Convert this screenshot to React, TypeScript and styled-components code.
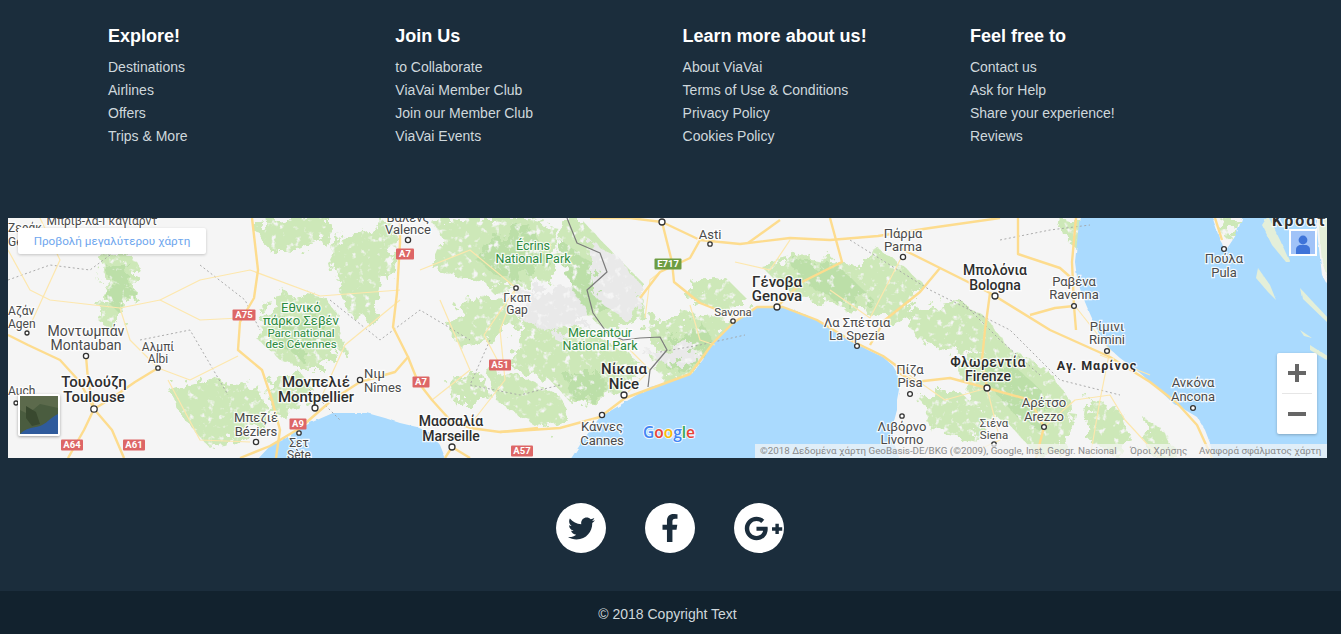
import styled, { createGlobalStyle } from 'styled-components';
import { FaTwitter, FaFacebookF, FaGooglePlusG } from 'react-icons/fa';

const GlobalStyle = createGlobalStyle`
  html, body {
    margin: 0;
    padding: 0;
    background: #1b2d3c;
    font-family: "Liberation Sans", Arial, sans-serif;
  }
`;

const Page = styled.footer`
  height: 634px;
  overflow: hidden;
  background: #1b2d3c;
  display: flex;
  flex-direction: column;
`;

const LinkColumns = styled.div`
  display: grid;
  grid-template-columns: repeat(4, 287.3px);
  padding: 25px 0 0 108px;
  height: 218px;
  box-sizing: border-box;
`;

const ColumnTitle = styled.h4`
  margin: 0 0 8.5px;
  color: #ffffff;
  font-size: 18px;
  line-height: 22px;
  font-weight: 700;
`;

const LinkList = styled.ul`
  margin: 0;
  padding: 0;
  list-style: none;
`;

const LinkItem = styled.li`
  color: #cfd8dc;
  font-size: 14px;
  line-height: 23px;
`;

const MapFrame = styled.div`
  position: relative;
  width: 1319px;
  height: 240px;
  margin-left: 8px;
  overflow: hidden;
  background: #f5f5f5;
  flex: none;
`;

const MapArt = styled.svg`
  display: block;
  width: 1319px;
  height: 240px;
`;

const MapLabel = styled.text<{ $size: number; $weight: number; $park?: boolean; $spacing?: number }>`
  font-family: Roboto, "Noto Sans", sans-serif;
  font-size: ${p => p.$size}px;
  font-weight: ${p => p.$weight};
  letter-spacing: ${p => p.$spacing ?? 0}px;
  fill: ${p => (p.$park ? '#2b8a3e' : p.$weight > 400 ? '#2e2e2e' : '#4a4a4a')};
  stroke: rgba(255, 255, 255, 0.85);
  stroke-width: 2.4px;
  paint-order: stroke;
`;

const ShieldText = styled.text`
  font-family: Roboto, "Liberation Sans", sans-serif;
  font-size: 9.5px;
  font-weight: 700;
  fill: #ffffff;
  text-anchor: middle;
`;

const GoogleMark = styled.text`
  font-family: "Open Sans", Roboto, sans-serif;
  font-size: 15.5px;
  font-weight: 600;
  stroke: rgba(255, 255, 255, 0.8);
  stroke-width: 2px;
  paint-order: stroke;
`;

const LargerMapButton = styled.div`
  position: absolute;
  left: 10px;
  top: 10px;
  width: 188px;
  height: 26px;
  background: #ffffff;
  border-radius: 2px;
  box-shadow: 0 1px 3px rgba(0, 0, 0, 0.2);
  color: #6ea6ee;
  font-family: Roboto, sans-serif;
  font-size: 11.7px;
  line-height: 26px;
  text-align: center;
`;

const PegmanBox = styled.div`
  position: absolute;
  left: 1281px;
  top: 11px;
  width: 24px;
  height: 23px;
  border: 2px solid #ffffff;
  background: #a1c3f8;
  display: flex;
  align-items: flex-end;
  justify-content: center;
`;

const ZoomControl = styled.div`
  position: absolute;
  left: 1269px;
  top: 135px;
  width: 40px;
  height: 81px;
  background: #ffffff;
  border-radius: 2px;
  box-shadow: 0 1px 3px rgba(0, 0, 0, 0.25);
  display: flex;
  flex-direction: column;
  align-items: center;
`;

const ZoomButton = styled.div`
  width: 100%;
  height: 40px;
  display: flex;
  align-items: center;
  justify-content: center;
`;

const ZoomDivider = styled.div`
  width: 30px;
  height: 1px;
  background: #e6e6e6;
`;

const SatelliteThumb = styled.div`
  position: absolute;
  left: 10px;
  top: 176px;
  width: 38px;
  height: 38px;
  border: 2px solid #ffffff;
  border-radius: 2px;
  box-shadow: 0 1px 3px rgba(0, 0, 0, 0.35);
  overflow: hidden;
`;

const Attribution = styled.div`
  position: absolute;
  right: 0;
  bottom: 0;
  width: 567px;
  height: 14px;
  padding-left: 5px;
  background: rgba(245, 245, 245, 0.72);
  display: flex;
  color: #8a8a8a;
  font-family: Roboto, sans-serif;
  font-size: 9.8px;
  line-height: 14px;
  white-space: nowrap;
`;

const AttributionItem = styled.span<{ $width: number }>`
  width: ${p => p.$width}px;
  flex: none;
`;

const SocialRow = styled.div`
  display: flex;
  gap: 39px;
  margin: 45px 0 38px 556px;
`;

const SocialCircle = styled.a`
  width: 50px;
  height: 50px;
  border-radius: 50%;
  background: #ffffff;
  color: #1b2d3c;
  display: flex;
  align-items: center;
  justify-content: center;
  flex: none;
`;

const PlusIcon = styled(FaGooglePlusG)`
  margin-left: 9px;
`;

const CopyrightBar = styled.div`
  height: 43px;
  background: #12222e;
  color: #cfd8dc;
  font-size: 14px;
  line-height: 46px;
  text-align: center;
  padding-right: 6px;
`;

const COLUMNS = [
  { title: 'Explore!', links: ['Destinations', 'Airlines', 'Offers', 'Trips & More'] },
  { title: 'Join Us', links: ['to Collaborate', 'ViaVai Member Club', 'Join our Member Club', 'ViaVai Events'] },
  { title: 'Learn more about us!', links: ['About ViaVai', 'Terms of Use & Conditions', 'Privacy Policy', 'Cookies Policy'] },
  { title: 'Feel free to', links: ['Contact us', 'Ask for Help', 'Share your experience!', 'Reviews'] },
];

// water, page coordinates
const WATER = [
  '257,460 270,446 283,440 298,430 310,423 333,413 367,413 385,418 400,423 417,427 430,433 440,445 446,460',
  '570,460 578,448 583,440 592,428 600,417 617,407 632,398 650,387 670,382 693,373 703,360 713,343 722,333 733,323 745,313 757,307 783,307 800,312 817,320 835,332 850,340 868,350 883,357 893,366 897,373 900,384 897,400 897,410 893,425 893,440 900,460',
  '1080,216 1078,232 1077,243 1075,262 1077,277 1081,292 1087,307 1095,325 1103,343 1120,358 1140,373 1157,388 1173,403 1187,411 1197,417 1205,430 1210,443 1213,460 1330,460 1330,290 1322,275 1318,240 1316,216 1243,216 1236,235 1226,250 1220,240 1212,216',
];

const ISLANDS = [
  '1268,216 1280,240 1290,262 1286,262 1272,245 1262,225',
  '1258,268 1270,285 1276,300 1268,292 1256,278',
  '1300,288 1330,320 1330,325 1302,298',
  '1310,345 1330,358 1330,362 1310,350',
  '1300,330 1312,338 1304,336',
  '1318,216 1330,216 1330,285 1322,262',
];

// forest patches
const GREEN = [
  '100,256 128,252 140,268 132,296 122,312 112,330 100,322 104,290',
  '262,318 275,298 300,292 325,296 338,316 345,350 322,368 298,368 276,356 258,340',
  '328,244 360,232 392,222 395,252 382,292 372,322 350,316 338,286',
  '252,225 285,218 330,218 322,240 296,250 268,250',
  '167,390 205,378 232,384 262,388 268,420 236,440 210,448 188,424',
  '268,380 300,372 312,388 292,408 272,420',
  '430,218 470,218 520,218 555,225 560,255 550,280 500,290 462,278 432,268 444,240',
  '462,300 500,296 520,320 492,340 462,350 448,328',
  '560,218 580,218 615,255 640,280 645,318 612,332 576,310 565,262',
  '522,322 570,322 612,344 640,362 628,388 600,400 572,404 552,382 512,368',
  '485,368 520,376 560,396 570,420 540,428 498,402',
  '448,378 482,374 488,402 452,402',
  '648,322 690,312 732,320 722,345 702,372 664,382 652,356',
  '690,284 728,280 748,300 720,310 690,302',
  '760,265 800,255 850,262 880,290 858,312 808,300 780,285',
  '845,272 880,250 905,268 925,285 900,322 870,318',
  '905,312 960,300 990,322 1010,350 965,352 920,342',
  '955,360 1005,345 1050,372 1070,400 1075,440 1040,458 1010,425 975,410',
  '1090,398 1120,410 1130,440 1118,458 1086,440',
  '1145,420 1165,432 1178,458 1150,458',
  '918,392 960,392 990,420 975,440 930,430',
  '1060,218 1080,218 1090,240 1080,252 1066,240',
  '1228,218 1240,218 1236,232 1228,240 1220,232',
];

const GREEN_DEEP = [
  '108,268 128,260 132,290 118,312 106,300',
  '285,320 315,310 330,340 300,358 278,345',
  '490,238 530,225 548,262 505,280 478,262',
  '560,372 600,372 612,392 576,402',
  '560,240 590,260 620,300 590,318 570,290',
  '670,340 702,322 716,345 690,372 665,368',
  '790,262 836,264 870,296 840,304 800,280',
  '975,365 1010,362 1046,395 1040,430 1010,410',
];

// snowy relief
const RELIEF = [
  '520,290 570,285 590,318 556,336 520,320',
  '590,240 620,258 646,292 626,320 598,300',
  '640,352 690,340 700,356 670,366',
];

const ROADS_MAJOR = [
  '8,335 28,345 60,360 80,382 94,409',
  '94,409 112,398 135,382 158,368',
  '94,409 84,430 68,458',
  '94,409 112,430 124,458',
  '86,356 88,380 94,409',
  '252,218 258,270 254,298 240,322 238,350 262,370 272,400 280,430 276,458',
  '400,218 400,243 397,293 393,327 408,357 395,372 360,382 332,400 300,428 270,446 240,458',
  '408,357 418,382 432,400 450,420 470,428 500,432 560,428 600,417 625,398 690,374 713,343 733,323 757,307 783,307 817,320 850,340 883,356 905,372',
  '452,447 445,458',
  '452,447 470,458',
  '500,432 538,428',
  '662,222 672,262 674,282 700,303 733,316',
  '590,218 630,218 662,222 700,240 740,244 790,238 830,240 878,236 930,228 1000,218',
  '700,240 690,258 660,272 640,298',
  '748,243 780,220',
  '830,218 842,262 802,282 777,307',
  '890,243 940,268 990,293 1050,330 1110,357 1150,382 1177,403 1197,425 1212,458',
  '990,293 985,330 982,360 987,388 1030,400 1044,427 1036,458',
  '987,388 950,378 915,382 897,372',
  '1030,315 1055,308 1074,306 1076,330',
  '1018,218 1018,254 1060,268 1076,282',
  '1076,218 1072,262 1074,306',
  '870,345 885,320 920,292 940,268',
  '1215,218 1222,240',
];

const ROADS_MINOR = [
  '8,250 30,290 50,300 120,308 160,300 200,320 240,318',
  '120,308 130,340 158,368 190,380 238,356',
  '40,218 60,260 28,330',
  '160,300 200,280 250,270 320,296 400,290',
  '168,380 200,440 250,442',
  '420,270 470,250 516,288 500,330 505,380 470,425',
  '516,288 484,335 500,365',
  '620,340 650,370 628,392',
  '645,318 650,280 660,272',
  '690,305 700,340 715,345',
  '735,262 770,270 790,240',
  '830,290 870,318 900,260 903,257',
  '905,372 945,400 987,388 1000,440 960,458',
  '1075,306 1110,350 1100,400 1090,458',
  '1044,427 1075,400 1110,395 1125,420 1160,458',
  '1100,355 1150,375',
  '320,400 345,345 400,300',
  '440,300 470,370 432,400',
];

const BOUNDARIES = [
  '8,280 50,265 90,270 130,240 180,235',
  '140,340 190,330 228,395',
  '200,265 245,300 260,330',
  '330,300 380,340 420,310 470,340',
  '300,380 340,420',
  '490,340 470,385 520,395 560,385',
  '660,352 700,345 745,335',
  '850,240 930,290 1010,330 1060,380 1120,395',
  '960,300 1000,340 1040,375',
  '1000,240 1050,230 1090,225',
];

const BORDER = '567,218 577,243 600,253 607,272 587,290 593,313 607,333 623,340 640,338 660,337 667,350 650,370 648,387';

const CITIES: [number, number, number][] = [
  [408, 240, 2.6], [86, 356, 2.6], [27, 333, 2], [158, 368, 2.2], [94, 409, 3.2], [315, 408, 3], [360, 380, 2.6],
  [256, 442, 2.6], [299, 433, 2.2], [452, 447, 3], [516, 288, 2.2], [624, 395, 3], [602, 415, 2.6], [733, 321, 2.2],
  [777, 307, 3], [857, 346, 2.4], [710, 244, 2.2], [662, 222, 3], [903, 257, 2.6], [995, 296, 3], [1074, 306, 2.4],
  [1107, 351, 2.4], [987, 388, 3], [910, 394, 2.4], [902, 416, 2.2], [1044, 427, 2.4], [994, 444, 2.2], [1193, 408, 2.4],
  [1224, 249, 2.4], [16, 403, 2],
];

const SHIELDS: [string, number, number, number, string][] = [
  ['A7', 405, 254, 18, '#dd6666'], ['A75', 244, 315, 23, '#dd6666'], ['A7', 421, 382, 17, '#dd6666'],
  ['A9', 298, 424, 17, '#dd6666'], ['A64', 72, 445, 22, '#dd6666'], ['A61', 134, 445, 22, '#dd6666'],
  ['A51', 500, 365, 22, '#dd6666'], ['A57', 522, 451, 22, '#dd6666'], ['E717', 668, 264, 27, '#6e9d42'],
];

type Label = { t: string; x: number; y: number; s?: number; w?: number; park?: boolean; start?: boolean; sp?: number };

const LABELS: Label[] = [
  { t: 'Μπριβ-λα-Γκαγιάρντ', x: 102, y: 225, s: 12 },
  { t: 'Βαλένς', x: 408, y: 222, s: 13 },
  { t: 'Valence', x: 408, y: 234, s: 13 },
  { t: 'Ζεράκ', x: 8, y: 232, s: 12, start: true },
  { t: 'Ger', x: 8, y: 246, s: 12, start: true },
  { t: 'Αζάν', x: 8, y: 315, s: 12, start: true },
  { t: 'Agen', x: 8, y: 328, s: 12, start: true },
  { t: 'Μοντωμπάν', x: 86, y: 336, s: 14 },
  { t: 'Montauban', x: 86, y: 350, s: 14 },
  { t: 'Αλμπί', x: 158, y: 351, s: 12 },
  { t: 'Albi', x: 158, y: 363, s: 12 },
  { t: 'Auch', x: 8, y: 395, s: 12, start: true },
  { t: 'Τουλούζη', x: 94, y: 387, s: 15, w: 500 },
  { t: 'Toulouse', x: 94, y: 402, s: 15, w: 500 },
  { t: 'Εθνικό', x: 301, y: 312, s: 13, park: true },
  { t: 'πάρκο Σεβέν', x: 301, y: 325, s: 13, park: true },
  { t: 'Parc national', x: 301, y: 337, s: 11.5, park: true },
  { t: 'des Cévennes', x: 301, y: 348, s: 11.5, park: true },
  { t: 'Μονπελιέ', x: 316, y: 387, s: 15, w: 500 },
  { t: 'Montpellier', x: 316, y: 402, s: 15, w: 500 },
  { t: 'Νιμ', x: 364, y: 378, s: 13, start: true },
  { t: 'Nîmes', x: 364, y: 392, s: 13, start: true },
  { t: 'Μπεζιέ', x: 256, y: 422, s: 13 },
  { t: 'Béziers', x: 256, y: 436, s: 13 },
  { t: 'Σετ', x: 299, y: 447, s: 12 },
  { t: 'Sète', x: 299, y: 459, s: 12 },
  { t: 'Μασσαλία', x: 451, y: 426, s: 14, w: 500 },
  { t: 'Marseille', x: 451, y: 441, s: 14, w: 500 },
  { t: 'Écrins', x: 533, y: 250, s: 12.5, park: true },
  { t: 'National Park', x: 533, y: 263, s: 12.5, park: true },
  { t: 'Γκαπ', x: 517, y: 302, s: 12 },
  { t: 'Gap', x: 517, y: 314, s: 12 },
  { t: 'Mercantour', x: 600, y: 337, s: 12.5, park: true },
  { t: 'National Park', x: 600, y: 350, s: 12.5, park: true },
  { t: 'Asti', x: 710, y: 239, s: 13 },
  { t: 'Γένοβα', x: 777, y: 287, s: 15, w: 500 },
  { t: 'Genova', x: 777, y: 301, s: 15, w: 500 },
  { t: 'Savona', x: 733, y: 316, s: 11.5 },
  { t: 'Νίκαια', x: 624, y: 374, s: 15, w: 500 },
  { t: 'Nice', x: 624, y: 389, s: 15, w: 500 },
  { t: 'Κάννες', x: 602, y: 431, s: 13 },
  { t: 'Cannes', x: 602, y: 445, s: 13 },
  { t: 'Λα Σπέτσια', x: 857, y: 327, s: 13 },
  { t: 'La Spezia', x: 857, y: 340, s: 13 },
  { t: 'Πάρμα', x: 903, y: 238, s: 13 },
  { t: 'Parma', x: 903, y: 251, s: 13 },
  { t: 'Μπολόνια', x: 995, y: 275, s: 14, w: 500 },
  { t: 'Bologna', x: 995, y: 290, s: 14, w: 500 },
  { t: 'Ραβένα', x: 1074, y: 286, s: 13 },
  { t: 'Ravenna', x: 1074, y: 299, s: 13 },
  { t: 'Ρίμινι', x: 1107, y: 331, s: 13 },
  { t: 'Rimini', x: 1107, y: 344, s: 13 },
  { t: 'Φλωρεντία', x: 988, y: 367, s: 14, w: 500, sp: 0.4 },
  { t: 'Firenze', x: 988, y: 381, s: 14, w: 500 },
  { t: 'Αγ. Μαρίνος', x: 1097, y: 370, s: 12.5, w: 700, sp: 1 },
  { t: 'Πίζα', x: 910, y: 374, s: 13 },
  { t: 'Pisa', x: 910, y: 387, s: 13 },
  { t: 'Λιβόρνο', x: 902, y: 431, s: 13 },
  { t: 'Livorno', x: 902, y: 444, s: 13 },
  { t: 'Αρέτσο', x: 1044, y: 407, s: 13 },
  { t: 'Arezzo', x: 1044, y: 421, s: 13 },
  { t: 'Σιένα', x: 994, y: 427, s: 11.5 },
  { t: 'Siena', x: 994, y: 439, s: 11.5 },
  { t: 'Ανκόνα', x: 1193, y: 387, s: 13 },
  { t: 'Ancona', x: 1193, y: 401, s: 13 },
  { t: 'Πούλα', x: 1224, y: 263, s: 13 },
  { t: 'Pula', x: 1224, y: 277, s: 13 },
  { t: 'Κροατία', x: 1272, y: 226, s: 16, w: 700, start: true, sp: 2 },
];

function RegionMap() {
  return (
    <MapArt viewBox="8 218 1319 240" xmlns="http://www.w3.org/2000/svg">
      <defs>
        {/* breaks the forest polygons into the mottled look of map terrain */}
        <filter id="rough" x="-5%" y="-5%" width="110%" height="110%">
          <feTurbulence type="fractalNoise" baseFrequency="0.09" numOctaves="4" seed="7" result="n" />
          <feDisplacementMap in="SourceGraphic" in2="n" scale="26" result="shape" />
          <feTurbulence type="fractalNoise" baseFrequency="0.14" numOctaves="3" seed="21" />
          <feColorMatrix values="0 0 0 0 1  0 0 0 0 1  0 0 0 0 1  0 0 0 5 -2.95" result="holes" />
          <feComposite in="shape" in2="holes" operator="out" />
        </filter>
        <filter id="coast" x="-2%" y="-2%" width="104%" height="104%">
          <feTurbulence type="fractalNoise" baseFrequency="0.12" numOctaves="2" seed="3" result="n" />
          <feDisplacementMap in="SourceGraphic" in2="n" scale="3" />
        </filter>
      </defs>
      <rect x="8" y="218" width="1319" height="240" fill="#f5f5f5" />
      <g filter="url(#rough)">
        {GREEN.map(p => <polygon key={p} points={p} fill="#cde8b8" />)}
        {GREEN_DEEP.map(p => <polygon key={p} points={p} fill="#bcdfa8" />)}
        {RELIEF.map(p => <polygon key={p} points={p} fill="#e9e9e9" />)}
      </g>
      <g filter="url(#coast)">
        {WATER.map(p => <polygon key={p} points={p} fill="#aadafe" />)}
        {ISLANDS.map(p => <polygon key={p} points={p} fill="#e4efd9" />)}
      </g>
      <g fill="none" stroke="#a3a3a3" strokeWidth="0.9" strokeDasharray="2 2.5">
        {BOUNDARIES.map(p => <polyline key={p} points={p} />)}
      </g>
      <g fill="none" stroke="#fde7ad" strokeWidth="1.2" strokeLinejoin="round">
        {ROADS_MINOR.map(p => <polyline key={p} points={p} />)}
      </g>
      <g fill="none" stroke="#fddc8e" strokeWidth="2.4" strokeLinejoin="round">
        {ROADS_MAJOR.map(p => <polyline key={p} points={p} />)}
      </g>
      <polyline points={BORDER} fill="none" stroke="#7b7b7b" strokeWidth="1.2" strokeLinejoin="round" />
      {SHIELDS.map(([label, x, y, w, color]) => (
        <g key={label + x}>
          <rect x={x - w / 2} y={y - 5.5} width={w} height={11} fill={color} rx="1" />
          <ShieldText x={x} y={y + 3.4}>{label}</ShieldText>
        </g>
      ))}
      {LABELS.map(l => (
        <MapLabel
          key={l.t + l.x + l.y}
          x={l.x}
          y={l.y}
          textAnchor={l.start ? 'start' : 'middle'}
          $size={l.s ?? 13}
          $weight={l.w ?? 400}
          $park={l.park}
          $spacing={l.sp}
        >
          {l.t}
        </MapLabel>
      ))}
      {CITIES.map(([x, y, r]) => (
        <circle key={`${x}-${y}`} cx={x} cy={y} r={r} fill="#ffffff" stroke="#333333" strokeWidth="1.3" />
      ))}
      <GoogleMark x="643" y="438">
        <tspan fill="#4285f4">G</tspan>
        <tspan fill="#ea4335">o</tspan>
        <tspan fill="#fbbc05">o</tspan>
        <tspan fill="#4285f4">g</tspan>
        <tspan fill="#34a853">l</tspan>
        <tspan fill="#ea4335">e</tspan>
      </GoogleMark>
    </MapArt>
  );
}

export default function App() {
  return (
    <Page>
      <GlobalStyle />
      <LinkColumns>
        {COLUMNS.map(column => (
          <div key={column.title}>
            <ColumnTitle>{column.title}</ColumnTitle>
            <LinkList>
              {column.links.map(link => (
                <LinkItem key={link}>{link}</LinkItem>
              ))}
            </LinkList>
          </div>
        ))}
      </LinkColumns>

      <MapFrame>
        <RegionMap />
        <LargerMapButton>Προβολή μεγαλύτερου χάρτη</LargerMapButton>
        <PegmanBox>
          <svg width="20" height="20" viewBox="0 0 20 20">
            <circle cx="10" cy="6" r="4.4" fill="#3f74d9" />
            <path d="M3 20v-4.5C3 12.5 5.5 11 7.5 11h5c2 0 4.500 1.500 4.500 4.500V20z" fill="#3f74d9" />
          </svg>
        </PegmanBox>
        <ZoomControl>
          <ZoomButton>
            <svg width="18" height="18" viewBox="0 0 18 18">
              <path d="M7 0h4v7h7v4h-7v7H7v-7H0V7h7z" fill="#666666" />
            </svg>
          </ZoomButton>
          <ZoomDivider />
          <ZoomButton>
            <svg width="18" height="4" viewBox="0 0 18 4">
              <rect width="18" height="4" fill="#666666" />
            </svg>
          </ZoomButton>
        </ZoomControl>
        <SatelliteThumb>
          <svg width="38" height="38" viewBox="0 0 38 38">
            <rect width="38" height="38" fill="#4a5c3f" />
            <path d="M0 0h38v12L20 8 8 18 0 14z" fill="#5c6a4c" />
            <path d="M6 10l10 6 4 12-8 2-6-8z" fill="#39492f" />
            <path d="M38 18c-8 4-12 10-18 12-8 2-14 2-20 8h38z" fill="#2f5b9c" />
          </svg>
        </SatelliteThumb>
        <Attribution>
          <AttributionItem $width={370}>©2018 Δεδομένα χάρτη GeoBasis-DE/BKG (©2009), Google, Inst. Geogr. Nacional</AttributionItem>
          <AttributionItem $width={69}>Όροι Χρήσης</AttributionItem>
          <AttributionItem $width={123}>Αναφορά σφάλματος χάρτη</AttributionItem>
        </Attribution>
      </MapFrame>

      <SocialRow>
        <SocialCircle><FaTwitter size={27} /></SocialCircle>
        <SocialCircle><FaFacebookF size={28} /></SocialCircle>
        <SocialCircle><PlusIcon size={39} /></SocialCircle>
      </SocialRow>

      <CopyrightBar>© 2018 Copyright Text</CopyrightBar>
    </Page>
  );
}
